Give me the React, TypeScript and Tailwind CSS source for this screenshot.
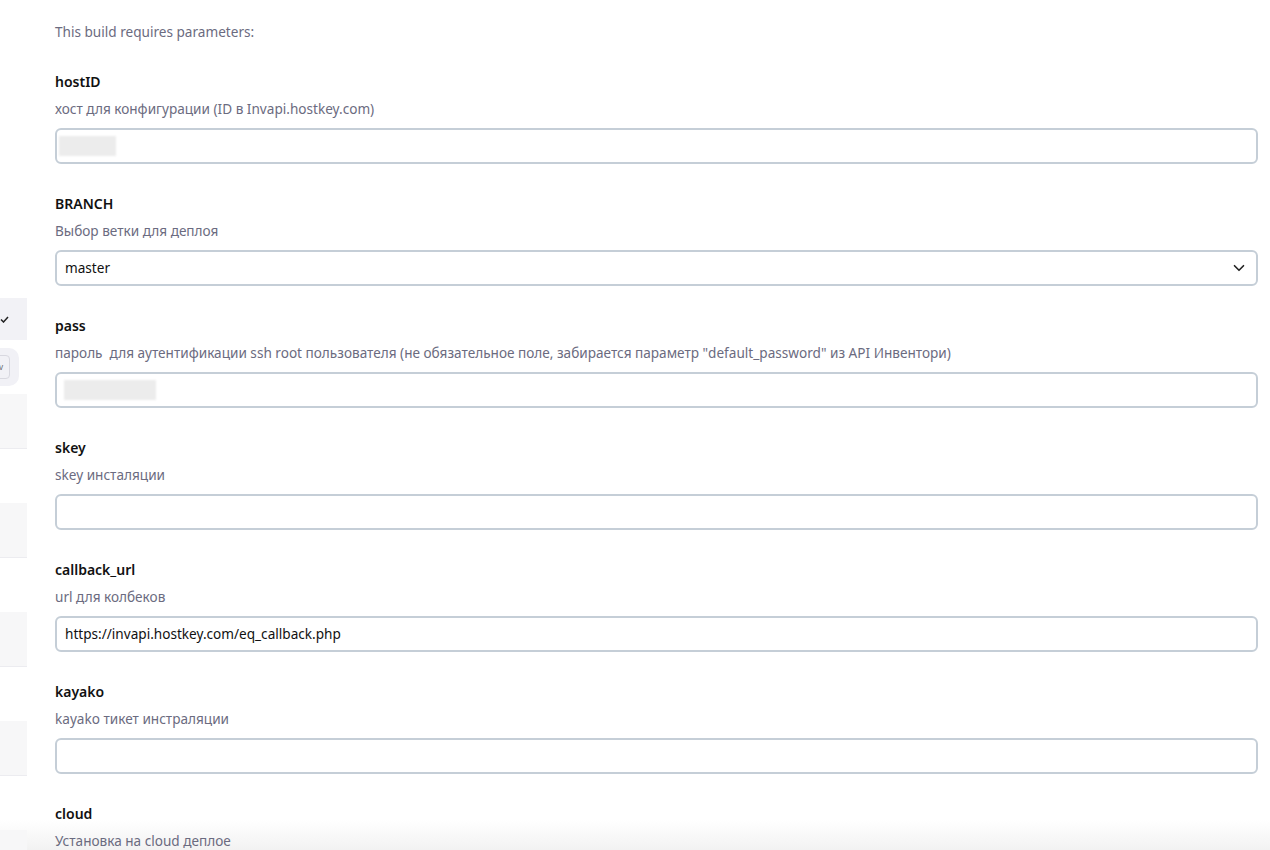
import { ChevronDown } from 'lucide-react';

type Param = {
  name: string;
  description: string;
  kind: 'text' | 'select' | 'secret';
  value?: string;
  blurWidth?: number;
  blurInset?: number;
};

const params: Param[] = [
  { name: 'hostID', description: 'хост для конфигурации (ID в Invapi.hostkey.com)', kind: 'secret', blurWidth: 57, blurInset: 2 },
  { name: 'BRANCH', description: 'Выбор ветки для деплоя', kind: 'select', value: 'master' },
  {
    name: 'pass',
    description: 'пароль  для аутентификации ssh root пользователя (не обязательное поле, забирается параметр "default_password" из API Инвентори)',
    kind: 'secret',
    blurWidth: 92,
    blurInset: 7,
  },
  { name: 'skey', description: 'skey инсталяции', kind: 'text', value: '' },
  { name: 'callback_url', description: 'url для колбеков', kind: 'text', value: 'https://invapi.hostkey.com/eq_callback.php' },
  { name: 'kayako', description: 'kayako тикет инстраляции', kind: 'text', value: '' },
  { name: 'cloud', description: 'Установка на cloud деплое', kind: 'text', value: '' },
];

const Sidebar = () => (
  <div className="w-[27px] shrink-0 overflow-hidden pt-[298px]">
    <div className="h-[42px] bg-[#f2f2f6] flex items-center justify-end pr-[21px]">
      <svg width="9" height="7" viewBox="0 0 9 7" className="-mr-[3px]">
        <path d="M1 3.5 L3.5 6 L8 1" fill="none" stroke="#222" strokeWidth="1.5" />
      </svg>
    </div>
    <div className="mt-[8px] h-[38px] w-[19px] bg-[#f1f1f6] rounded-r-[10px] flex items-center justify-end pr-[9px]">
      <div className="h-[24px] w-[20px] shrink-0 border border-[#d8d8e0] rounded-r-[4px] flex items-center justify-end pr-[6px] text-[8px] text-[#666]">
        v
      </div>
    </div>
    {[0, 1, 2, 3, 4].map((i) => (
      <div key={i} className={`h-[55px] bg-[#f7f7f8] border-b border-[#ececf0] ${i === 0 ? 'mt-[8px]' : 'mt-[54px]'}`} />
    ))}
  </div>
);

const Field = ({ p }: { p: Param }) => (
  <div className="mt-[30px]">
    <div className="text-[14px] leading-[20px] font-semibold text-[#111]">{p.name}</div>
    <div className="mt-[7px] text-[13.6px] leading-[20px] text-[#6b6b80] whitespace-pre">{p.description}</div>
    {p.kind === 'select' ? (
      <div className="mt-[9px] h-[36px] rounded-[6px] border-2 border-[#c5ced7] bg-white flex items-center justify-between pl-[8px] pr-[8px] text-[13.6px] text-[#111]">
        <span>{p.value}</span>
        <ChevronDown size={18} strokeWidth={2.2} className="text-[#222]" />
      </div>
    ) : p.kind === 'secret' ? (
      <div className="mt-[9px] h-[36px] rounded-[6px] border-2 border-[#c5ced7] bg-white flex items-center">
        <div
          className="h-[20px] bg-[#ececec] blur-[1px]"
          style={{ width: p.blurWidth, marginLeft: p.blurInset }}
        />
      </div>
    ) : (
      <div className="mt-[9px] h-[36px] rounded-[6px] border-2 border-[#c5ced7] bg-white flex items-center pl-[8px] text-[13.6px] text-[#111]">
        {p.value}
      </div>
    )}
  </div>
);

export default function App() {
  return (
    <div
      className="relative h-[850px] w-[1270px] overflow-hidden bg-white"
      style={{ fontFamily: '"Noto Sans", "Open Sans", sans-serif' }}
    >
      <div className="absolute left-0 right-0 bottom-0 h-[30px] bg-gradient-to-b from-white to-[#f2f2f2]" />
      <div className="relative flex">
        <Sidebar />
        <div className="flex-1 pl-[28px] pr-[12px] pt-[22px]">
          <div className="text-[13.6px] leading-[20px] text-[#6b6b80]">This build requires parameters:</div>
          <div>
            {params.map((p) => (
              <Field key={p.name} p={p} />
            ))}
          </div>
        </div>
      </div>
    </div>
  );
}
